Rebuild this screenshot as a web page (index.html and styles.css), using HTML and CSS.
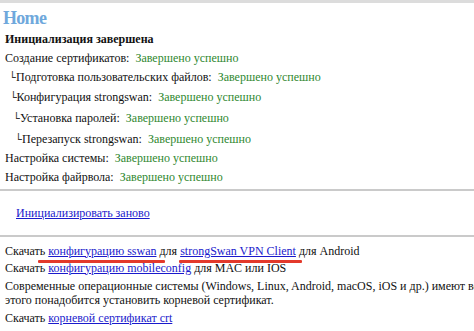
FILE: index.html
```html
<!DOCTYPE html>
<html lang="ru">
<head>
<meta charset="utf-8">
<title>Home</title>
<link rel="stylesheet" href="styles.css">
</head>
<body>
<div class="topbar"></div>
<h1 class="title">Home</h1>
<div class="status">
  <div class="row head">Инициализация завершена</div>
  <div class="row r1">Создание сертификатов:<span class="ok">Завершено успешно</span></div>
  <div class="row r2"><span class="tree">└</span>Подготовка пользовательских файлов:<span class="ok">Завершено успешно</span></div>
  <div class="row r3"><span class="tree">└</span>Конфигурация strongswan:<span class="ok">Завершено успешно</span></div>
  <div class="row r4"><span class="tree">└</span>Установка паролей:<span class="ok">Завершено успешно</span></div>
  <div class="row r5"><span class="tree">└</span>Перезапуск strongswan:<span class="ok">Завершено успешно</span></div>
  <div class="row r6">Настройка системы:<span class="ok">Завершено успешно</span></div>
  <div class="row r7">Настройка файрвола:<span class="ok">Завершено успешно</span></div>
</div>
<hr class="rule first">
<div class="reinit"><a href="#">Инициализировать заново</a></div>
<hr class="rule">
<div class="downloads">
  <p>Скачать <a href="#" class="mark m1">конфигурацию sswan</a> для <a href="#" class="mark m2">strongSwan VPN Client</a> для Android</p>
  <p class="p2">Скачать <a href="#">конфигурацию mobileconfig</a> для MAC или IOS</p>
  <p class="p3">Современные операционные системы (Windows, Linux, Android, macOS, iOS и др.) имеют встроенную поддержку IKEv2, для<br>этого понадобится установить корневой сертификат.</p>
  <p class="p4">Скачать <a href="#">корневой сертификат crt</a></p>
</div>
</body>
</html>
```

FILE: styles.css
```css
html, body {
  margin: 0;
  padding: 0;
  background: #ffffff;
}
body {
  font-family: "Liberation Serif", Times, serif;
  font-size: 12px;
  color: #111111;
  overflow: hidden;
}
.topbar {
  height: 3px;
  background: #dcdcdc;
}
.title {
  margin: 4px 0 0 3px;
  font-family: "Liberation Serif", Times, serif;
  font-size: 18px;
  line-height: 22px;
  font-weight: bold;
  letter-spacing: -0.7px;
  color: #6fa8dc;
}
.status {
  padding: 1px 0 0 5px;
}
.row {
  white-space: nowrap;
  line-height: 19px;
}
.row.head {
  font-weight: bold;
  line-height: 18.5px;
}
.row.r2 { line-height: 19.5px; }
.row.r3 { line-height: 20.5px; }
.row.r4 { line-height: 21px; }
.row.r5 { line-height: 21.5px; }
.row.r6 { line-height: 17.5px; }
.tree {
  display: inline-block;
  width: 7px;
  font-family: "DejaVu Sans", sans-serif;
  font-size: 11px;
  line-height: 1;
  color: #333;
}
.r2 .tree { margin-left: 4px; }
.r3 .tree { margin-left: 5px; width: 6.5px; }
.r4 .tree { margin-left: 8px; }
.r5 .tree { margin-left: 10px; }
.ok {
  color: #2f882f;
  margin-left: 6px;
}
.rule {
  border: 0;
  border-top: 2px solid #cacaca;
  margin: 0;
}
.rule.first {
  margin-top: 2px;
}
.reinit {
  padding: 13px 0 13px 16px;
  line-height: 18px;
}
a {
  color: #1a1acc;
  text-decoration: underline;
}
.downloads {
  padding: 7px 5px 0 5px;
}
.downloads p {
  margin: 0;
  line-height: 14px;
  white-space: nowrap;
}
.downloads .p2 { margin-top: 3px; }
.downloads .p3 { margin-top: 4px; }
.downloads .p4 { margin-top: 4px; }
.mark {
  position: relative;
}
.mark::after {
  content: "";
  position: absolute;
  bottom: -5px;
  height: 3px;
  background: #e3392b;
  border-radius: 1px;
}
.m1::after { left: -10px; right: -8px; }
.m2::after { left: -1px; right: -6px; }
```
